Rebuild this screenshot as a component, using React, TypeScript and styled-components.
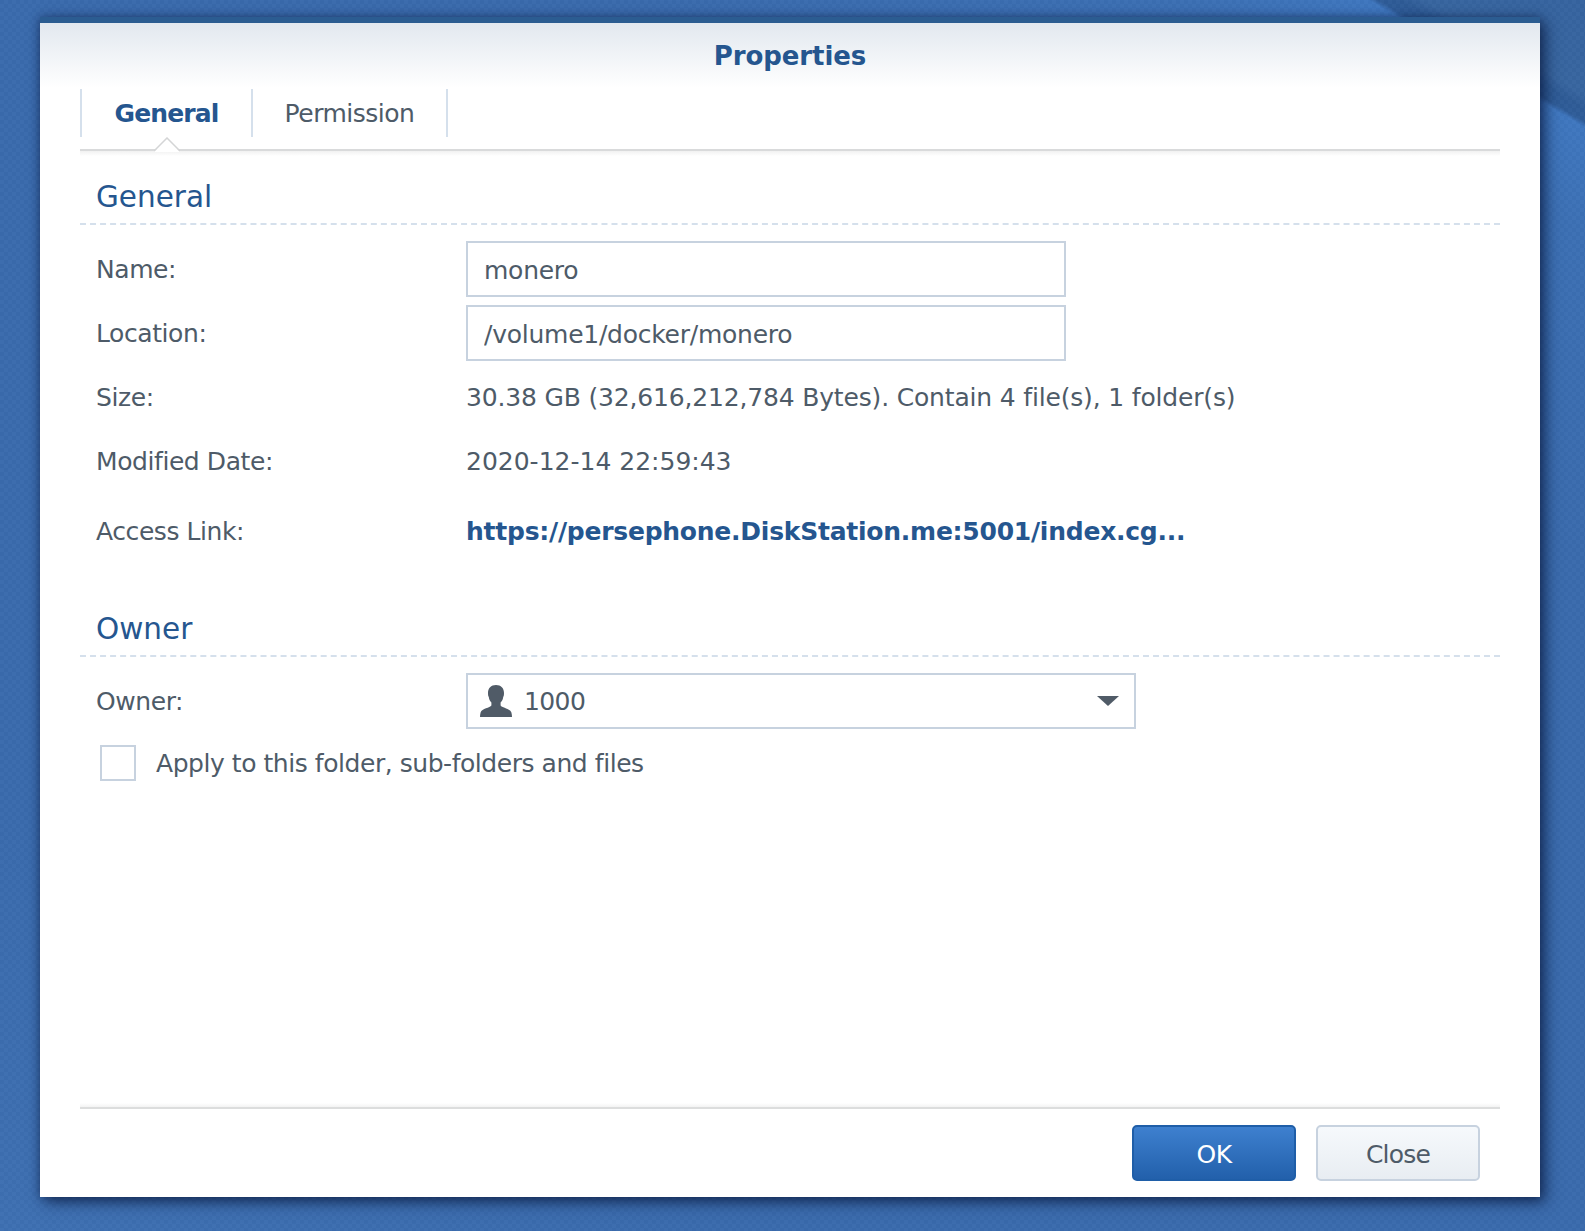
import { createGlobalStyle } from 'styled-components'
import styled from 'styled-components'

const TEXT = '#4e5b68'
const BLUE = '#25568f'
const LINE = '#d5e0ec'
const FIELD = '#c7d2df'

const GlobalStyle = createGlobalStyle`
  html, body {
    margin: 0;
    padding: 0;
  }
  body {
    font-family: "DejaVu Sans", Verdana, sans-serif;
    color: ${TEXT};
  }
`

const Desktop = styled.div`
  box-sizing: border-box;
  width: 1585px;
  height: 1231px;
  padding: 17px 45px 0 40px;
  overflow: hidden;
  background:
    repeating-conic-gradient(rgba(255, 255, 255, 0.016) 0% 25%, rgba(0, 0, 0, 0.016) 0% 50%) 0 0 / 8px 8px,
    linear-gradient(
      210.5deg,
      #36649f 0,
      #38669f 82px,
      #2f5b96 94px,
      #2f5c98 105px,
      #3f77bf 110px,
      #3c70b4 200px,
      #3a6bad 480px,
      #3a6bad 1500px,
      #3e70b2 1863px
    );
`

const Window = styled.div`
  box-sizing: border-box;
  display: flex;
  flex-direction: column;
  width: 1500px;
  height: 1180px;
  border-top: 6px solid #2b5c91;
  background: #fff;
  box-shadow: 5px 5px 14px rgba(8, 24, 60, 0.72), -1px 0 8px rgba(8, 24, 60, 0.35);
`

const TitleBar = styled.div`
  height: 65px;
  box-sizing: border-box;
  display: flex;
  align-items: center;
  justify-content: center;
  background: linear-gradient(#e2e8ef, #fff);
  color: ${BLUE};
  font-size: 26px;
  font-weight: 700;
  letter-spacing: -0.1px;
`

const Body = styled.div`
  flex: 1;
  display: flex;
  flex-direction: column;
  padding: 0 40px;
`

const TabBar = styled.div`
  position: relative;
  display: flex;
  height: 63px;
  padding-top: 1px;
  box-sizing: border-box;
  border-bottom: 2px solid #d9dadb;

  &::after {
    content: '';
    position: absolute;
    left: 0;
    right: 0;
    top: 100%;
    margin-top: 2px;
    height: 5px;
    background: linear-gradient(#f1f1f1, #fff);
  }
`

const Tab = styled.div<{ $active?: boolean; $first?: boolean; $width: number }>`
  position: relative;
  box-sizing: border-box;
  width: ${({ $width }) => $width}px;
  height: 48px;
  display: flex;
  align-items: center;
  justify-content: center;
  font-size: 25px;
  font-weight: ${({ $active }) => ($active ? 700 : 400)};
  letter-spacing: ${({ $active }) => ($active ? '-0.85px' : '-0.5px')};
  color: ${({ $active }) => ($active ? BLUE : TEXT)};
  border-right: 2px solid ${LINE};
  border-left: ${({ $first }) => ($first ? `2px solid ${LINE}` : 'none')};
`

const TabCaret = styled.svg`
  position: absolute;
  z-index: 1;
  left: 72px;
  top: 48px;
  width: 26px;
  height: 15px;
`

const SectionTitle = styled.div<{ $gap?: number }>`
  box-sizing: border-box;
  height: 74px;
  margin-top: ${({ $gap }) => $gap ?? 0}px;
  padding: 26px 0 0 16px;
  border-bottom: 2px dashed ${LINE};
  color: ${BLUE};
  font-size: 29.5px;
  line-height: 40px;
`

const Rows = styled.div`
  display: flex;
  flex-direction: column;
  gap: 8px;
  margin-top: 16px;
`

const Row = styled.div<{ $offset?: number }>`
  display: flex;
  align-items: center;
  min-height: 56px;
  padding-left: 16px;
  margin-top: ${({ $offset }) => $offset ?? 0}px;
  font-size: 25px;
`

const Label = styled.div`
  width: 370px;
  flex: none;
  letter-spacing: -0.42px;
`

const Value = styled.div<{ $track?: number }>`
  letter-spacing: ${({ $track }) => $track ?? 0}px;
`

const TextField = styled.input`
  box-sizing: border-box;
  width: 600px;
  height: 56px;
  padding: 2px 16px 0;
  border: 2px solid ${FIELD};
  border-radius: 0;
  outline: none;
  background: #fff;
  color: ${TEXT};
  font: inherit;
  letter-spacing: -0.25px;
`

const Link = styled.a`
  color: ${BLUE};
  font-weight: 700;
  letter-spacing: -0.24px;
  text-decoration: none;
`

const Select = styled.div`
  box-sizing: border-box;
  width: 670px;
  height: 56px;
  display: flex;
  align-items: center;
  gap: 12px;
  padding: 0 15px 0 12px;
  border: 2px solid ${FIELD};
  letter-spacing: -0.6px;
`

const UserIcon = styled.svg`
  width: 32px;
  height: 32px;
  fill: #505b67;
  flex: none;
`

const SelectCaret = styled.span`
  margin-left: auto;
  width: 0;
  height: 0;
  border-left: 11px solid transparent;
  border-right: 11px solid transparent;
  border-top: 10px solid #505b67;
`

const CheckRow = styled.label`
  display: flex;
  align-items: center;
  gap: 20px;
  margin-top: 16px;
  padding-left: 20px;
  font-size: 25px;
  letter-spacing: -0.45px;
`

const CheckBox = styled.input`
  appearance: none;
  box-sizing: border-box;
  width: 36px;
  height: 36px;
  margin: 0;
  border: 2px solid ${FIELD};
  background: #fff;
`

const Footer = styled.div`
  position: relative;
  margin-top: auto;
  display: flex;
  justify-content: flex-end;
  gap: 20px;
  padding: 16px 20px 16px 0;
  border-top: 2px solid #dcdddd;

  &::before {
    content: '';
    position: absolute;
    left: 0;
    right: 0;
    bottom: 100%;
    margin-bottom: 2px;
    height: 4px;
    background: linear-gradient(#fff, #f3f3f3);
  }
`

const Button = styled.button<{ $primary?: boolean }>`
  box-sizing: border-box;
  width: 164px;
  height: 56px;
  padding: 2px 0 0;
  border-radius: 5px;
  border: 2px solid ${({ $primary }) => ($primary ? '#1f5ea8' : FIELD)};
  background: ${({ $primary }) =>
    $primary ? 'linear-gradient(#3e80cf, #2260ab)' : 'linear-gradient(#f6f9fc, #e8edf2)'};
  color: ${({ $primary }) => ($primary ? '#fff' : TEXT)};
  font: inherit;
  font-size: 25px;
  letter-spacing: ${({ $primary }) => ($primary ? '-0.5px' : '-0.8px')};
`

const App = () => {
  return (
    <>
      <GlobalStyle />
      <Desktop>
        <Window>
          <TitleBar>Properties</TitleBar>
          <Body>
            <TabBar>
              <Tab $active $first $width={173}>
                General
                <TabCaret viewBox="0 0 26 15">
                  <path d="M0 15 L13 1 L26 15 Z" fill="#fff" />
                  <path d="M0 14 L13 1 L26 14" fill="none" stroke="#d4d5d6" strokeWidth="1.5" />
                </TabCaret>
              </Tab>
              <Tab $width={195}>Permission</Tab>
            </TabBar>

            <SectionTitle>General</SectionTitle>
            <Rows>
              <Row>
                <Label>Name:</Label>
                <TextField readOnly value="monero" />
              </Row>
              <Row>
                <Label>Location:</Label>
                <TextField readOnly value="/volume1/docker/monero" />
              </Row>
              <Row>
                <Label>Size:</Label>
                <Value $track={-0.17}>30.38 GB (32,616,212,784 Bytes). Contain 4 file(s), 1 folder(s)</Value>
              </Row>
              <Row>
                <Label>Modified Date:</Label>
                <Value>2020-12-14 22:59:43</Value>
              </Row>
              <Row $offset={6}>
                <Label>Access Link:</Label>
                <Link href="#">https://persephone.DiskStation.me:5001/index.cg...</Link>
              </Row>
            </Rows>

            <SectionTitle $gap={24}>Owner</SectionTitle>
            <Rows>
              <Row>
                <Label>Owner:</Label>
                <Select>
                  <UserIcon viewBox="0 0 32 32">
                    <path d="M16 0c-5 0-8 3-8 8 0 2 .2 3 .8 4 .2 2 1 4 2.6 5.6v3C10 23 2 23.5.6 27.5.2 29 0 30.5 0 32h32c0-1.5-.2-3-.6-4.500C30 23.500 22 23 20.600 20.600v-3C22.200 16 23 14 23.200 12c.6-1 .8-2 .8-4 0-5-3-8-8-8z" />
                  </UserIcon>
                  <span>1000</span>
                  <SelectCaret />
                </Select>
              </Row>
            </Rows>
            <CheckRow>
              <CheckBox type="checkbox" />
              Apply to this folder, sub-folders and files
            </CheckRow>

            <Footer>
              <Button $primary>OK</Button>
              <Button>Close</Button>
            </Footer>
          </Body>
        </Window>
      </Desktop>
    </>
  )
}

export default App
